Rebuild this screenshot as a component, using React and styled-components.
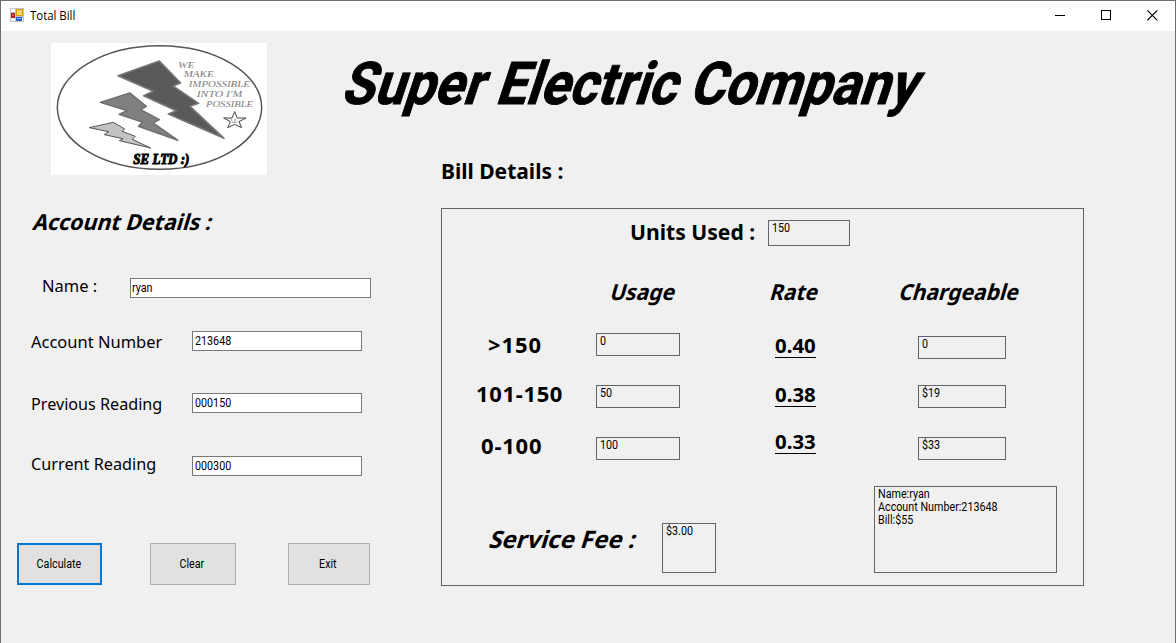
import React from 'react';
import styled, { createGlobalStyle } from 'styled-components';

const GlobalStyle = createGlobalStyle`
  * { box-sizing: border-box; }
  body { margin: 0; background: #f0f0f0; overflow: hidden; }
`;

const ui = '"Noto Sans", "Open Sans", sans-serif';
const small = 'Roboto, "Liberation Sans", sans-serif';

const Window = styled.div`
  width: 1176px;
  height: 643px;
  background: #f0f0f0;
  border: 1px solid #6e6e70;
  border-bottom: 0;
  color: #000;
  font-family: ${ui};
`;

const TitleBar = styled.header`
  height: 30px;
  background: #fff;
  display: flex;
  align-items: center;
  padding: 0 0 1px 9px;
`;

const WindowTitle = styled.span`
  flex: 1;
  margin-left: 5px;
  font: 12px/29px "Open Sans", sans-serif;
  transform: scaleX(0.95);
  transform-origin: left;
`;

const WindowButton = styled.span`
  width: 46px;
  height: 29px;
  display: flex;
  align-items: center;
  justify-content: center;
`;

const Header = styled.div`
  height: 159px;
  padding: 12px 0 0 50px;
  display: flex;
`;

const LogoBox = styled.div`
  width: 216px;
  height: 132px;
  background: #fff;
`;

const Heading = styled.div`
  margin-left: 73px;
`;

const CompanyName = styled.h1`
  margin: 11px 0 42px;
  height: 60px;
  font: 700 59px/60px Roboto, "Liberation Sans", sans-serif;
  white-space: nowrap;
  -webkit-text-stroke: 0.9px #000;
  transform: scaleX(0.905) skewX(-20deg);
  transform-origin: 0 50px;
`;

const Text = styled.div`
  height: 30px;
  padding-left: ${p => p.$indent || 0}px;
  margin-top: ${p => p.$drop || 0}px;
  font: 700 ${p => p.$size || 22}px/28px ${ui};
  letter-spacing: ${p => p.$tracking || 0}px;
  white-space: nowrap;

  > span {
    display: inline-block;
    transform-origin: 0 22px;
    transform: scaleX(${p => p.$stretch || 1}) skewX(${p => (p.$slanted ? -17 : 0)}deg);
  }
`;

const Columns = styled.div`
  display: flex;
  align-items: flex-start;
`;

const AccountForm = styled.section`
  width: 440px;
  padding-top: 17px;
`;

const Field = styled.label`
  display: flex;
  align-items: flex-start;
  height: 30px;
  margin-top: ${p => p.$gap}px;
  padding-left: ${p => p.$left}px;
`;

const FieldName = styled.span`
  width: ${p => p.$width}px;
  padding-top: ${p => p.$drop}px;
  font: 16px/20px ${ui};
  white-space: nowrap;

  > span {
    display: inline-block;
    transform: scaleX(${p => p.$stretch});
    transform-origin: left;
  }
`;

const SmallText = styled.span`
  display: inline-block;
  font: 12px/13px ${small};
  white-space: nowrap;
  transform: scaleX(0.895);
  transform-origin: ${p => (p.$centered ? 'center' : 'left')};
`;

const TextBox = styled.span`
  width: ${p => p.$width}px;
  height: 20px;
  margin-top: 5px;
  padding: 3px 0 0 ${p => (p.$low ? 1 : 2)}px;
  border: 1px solid #7a7a7a;
  background: #fff;
  display: flex;
  align-items: flex-start;
`;

const Actions = styled.div`
  display: flex;
  margin: 62px 0 0 16px;
`;

const Button = styled.button`
  width: ${p => p.$width}px;
  height: 42px;
  margin-right: ${p => p.$gap || 0}px;
  padding: 0 2px 2px 0;
  color: #000;
  border: ${p => (p.$primary ? '2px solid #0078d7' : '1px solid #adadad')};
  background: #e1e1e1;
`;

const BillPanel = styled.section`
  width: 643px;
  height: 378px;
  margin-top: 18px;
  border: 1px solid #646464;
`;

const PanelRow = styled.div`
  display: flex;
  align-items: flex-start;
  height: ${p => p.$height}px;
`;

const Cell = styled.div`
  width: ${p => p.$width}px;
`;

const Output = styled.div`
  width: ${p => p.$width}px;
  height: ${p => p.$height || 23}px;
  margin-top: ${p => p.$drop || 0}px;
  padding: 1px 0 0 3px;
  border: 1px solid #646464;
  display: flex;
  flex-direction: column;
  align-items: flex-start;
`;

const Rate = styled.div`
  width: 41px;
  height: 28px;
  margin: 0 0 0 95px;
  border-bottom: 1px solid #000;
  font: 700 20px/32px ${ui};

  > span {
    display: inline-block;
    transform: scaleX(1.02);
    transform-origin: left;
  }
`;

function AppIcon() {
  return (
    <svg width="15" height="15" viewBox="0 0 15 15">
      <rect x="0" y="0" width="14" height="14" fill="#c3c3c3" />
      <path d="M1 1h4v3H1zM1 10h4v3H1zM12 10h1v3h-1z" fill="#fff" />
      <rect x="1" y="5" width="4" height="5" fill="#b01e16" />
      <rect x="2" y="6" width="2" height="2" fill="#e0554a" />
      <rect x="6" y="1" width="7" height="7" fill="#d99b13" />
      <rect x="7" y="2" width="5" height="5" fill="#ffd656" />
      <rect x="6" y="9" width="6" height="4" fill="#2c62c9" />
      <rect x="7" y="10" width="4" height="1" fill="#7fb2f5" />
    </svg>
  );
}

function Logo() {
  const motto = { fontFamily: '"Liberation Serif", serif', fontStyle: 'italic', fontSize: 25, fill: '#7c7c7c', lengthAdjust: 'spacingAndGlyphs' };
  return (
    <svg width="216" height="132" viewBox="3 3 648 396">
      <ellipse cx="328.5" cy="196.5" rx="306.5" ry="185.5" fill="none" stroke="#555" strokeWidth="4.5" />
      <g strokeLinejoin="round">
        <path d="M204 101 328 57 392 123 369 132 446 184 420 193 522 289 355 216 379 206 281 161 310 148Z" fill="#595959" stroke="#777" strokeWidth="5" />
        <path d="M151 181 240 153 289 193 272 203 328 233 310 243 384 295 265 253 277 240 207 217 231 206Z" fill="#808080" stroke="#6c6c6c" strokeWidth="4" />
        <path d="M118 257 190 241 224 261 216 268 256 283 247 292 302 318 208 296 219 290 163 278 176 269Z" fill="#c3c3c3" stroke="#555" strokeWidth="3" />
        <path d="M554 209 562 228 588 228 567 239 575 257 554 247 533 257 541 239 521 228 546 228Z" fill="#fff" stroke="#444" strokeWidth="3" />
      </g>
      <path d="M545 231v5M556 230v5M546 240q8 4 16-1M554 233v5" fill="none" stroke="#666" strokeWidth="2" />
      <text {...motto} x="384" y="77" textLength="50">WE</text>
      <text {...motto} x="401" y="106" textLength="90">MAKE</text>
      <text {...motto} x="416" y="134" textLength="184">IMPOSSIBLE</text>
      <text {...motto} x="440" y="164" textLength="137">INTO I'M</text>
      <text {...motto} x="468" y="194" textLength="141">POSSIBLE</text>
      <text x="250" y="366" textLength="168" lengthAdjust="spacingAndGlyphs" fontFamily='"Liberation Serif", serif' fontStyle="italic" fontWeight="700" fontSize="43" stroke="#000" strokeWidth="3">SE LTD :)</text>
    </svg>
  );
}

function Entry({ name, value, width, boxWidth, gap, left, drop, stretch, low }) {
  return (
    <Field $gap={gap} $left={left}>
      <FieldName $width={width} $drop={drop} $stretch={stretch}><span>{name}</span></FieldName>
      <TextBox $width={boxWidth} $low={low}><SmallText>{value}</SmallText></TextBox>
    </Field>
  );
}

function Tier({ height, name, indent, tracking, nameDrop, usage, usageDrop, rate, charge, chargeDrop }) {
  return (
    <PanelRow $height={height}>
      <Cell $width={154}><Text $indent={indent} $drop={nameDrop} $tracking={tracking}><span>{name}</span></Text></Cell>
      <Output $width={84} $drop={usageDrop}><SmallText>{usage}</SmallText></Output>
      <Cell $width={238}><Rate><span>{rate}</span></Rate></Cell>
      <Output $width={88} $drop={chargeDrop}><SmallText>{charge}</SmallText></Output>
    </PanelRow>
  );
}

export default function App() {
  return (
    <Window>
      <GlobalStyle />
      <TitleBar>
        <AppIcon />
        <WindowTitle>Total Bill</WindowTitle>
        <WindowButton><svg width="11" height="11"><path d="M0 5.5h10" stroke="#000" /></svg></WindowButton>
        <WindowButton><svg width="11" height="11"><rect x=".5" y=".5" width="9" height="9" fill="none" stroke="#000" /></svg></WindowButton>
        <WindowButton><svg width="11" height="11"><path d="M.3 .3 10.3 10.3M10.3 .3 .3 10.3" stroke="#000" strokeWidth="1.1" /></svg></WindowButton>
      </TitleBar>
      <Header>
        <LogoBox><Logo /></LogoBox>
        <Heading>
          <CompanyName>Super Electric Company</CompanyName>
          <Text $indent={101} $stretch={0.955}><span>Bill Details :</span></Text>
        </Heading>
      </Header>
      <Columns>
        <AccountForm>
          <Text $indent={31} $slanted $stretch={0.973}><span>Account Details :</span></Text>
          <Entry name="Name :" value="ryan" gap={36} left={41} width={88} boxWidth={241} drop={3} stretch={1.03} low />
          <Entry name="Account Number" value="213648" gap={23} left={30} width={161} boxWidth={170} drop={6} stretch={1.03} />
          <Entry name="Previous Reading" value="000150" gap={32} left={30} width={161} boxWidth={170} drop={6} stretch={1.01} />
          <Entry name="Current Reading" value="000300" gap={33} left={30} width={161} boxWidth={170} drop={3} stretch={1.015} />
          <Actions>
            <Button $width={85} $gap={48} $primary><SmallText $centered>Calculate</SmallText></Button>
            <Button $width={86} $gap={52}><SmallText $centered>Clear</SmallText></Button>
            <Button $width={82}><SmallText $centered>Exit</SmallText></Button>
          </Actions>
        </AccountForm>
        <BillPanel>
          <PanelRow $height={68}>
            <Cell $width={326}><Text $indent={188} $drop={8} $stretch={0.96}><span>Units Used :</span></Text></Cell>
            <Output $width={82} $height={26} $drop={11}><SmallText>150</SmallText></Output>
          </PanelRow>
          <PanelRow $height={53}>
            <Cell $width={326}><Text $indent={167} $slanted $stretch={0.955}><span>Usage</span></Text></Cell>
            <Cell $width={130}><Text $indent={1} $slanted $stretch={0.95}><span>Rate</span></Text></Cell>
            <Cell $width={160}><Text $indent={0} $slanted $stretch={0.957}><span>Chargeable</span></Text></Cell>
          </PanelRow>
          <Tier height={49} name=">150" indent={46} tracking={0.9} usage="0" usageDrop={3} rate="0.40" charge="0" chargeDrop={6} />
          <Tier height={47} name="101-150" indent={34} tracking={0.65} usage="50" usageDrop={6} rate="0.38" charge="$19" chargeDrop={6} />
          <Tier height={60} name="0-100" indent={39} tracking={0.8} nameDrop={5} usage="100" usageDrop={11} rate="0.33" charge="$33" chargeDrop={11} />
          <PanelRow $height={87}>
            <Cell $width={220}><Text $indent={46} $drop={39} $size={24} $slanted $stretch={0.995}><span>Service Fee :</span></Text></Cell>
            <Output $width={54} $height={50} $drop={37}><SmallText>$3.00</SmallText></Output>
            <Cell $width={158} />
            <Output $width={183} $height={87}>
              <SmallText>Name:ryan</SmallText>
              <SmallText>Account Number:213648</SmallText>
              <SmallText>Bill:$55</SmallText>
            </Output>
          </PanelRow>
        </BillPanel>
      </Columns>
    </Window>
  );
}
